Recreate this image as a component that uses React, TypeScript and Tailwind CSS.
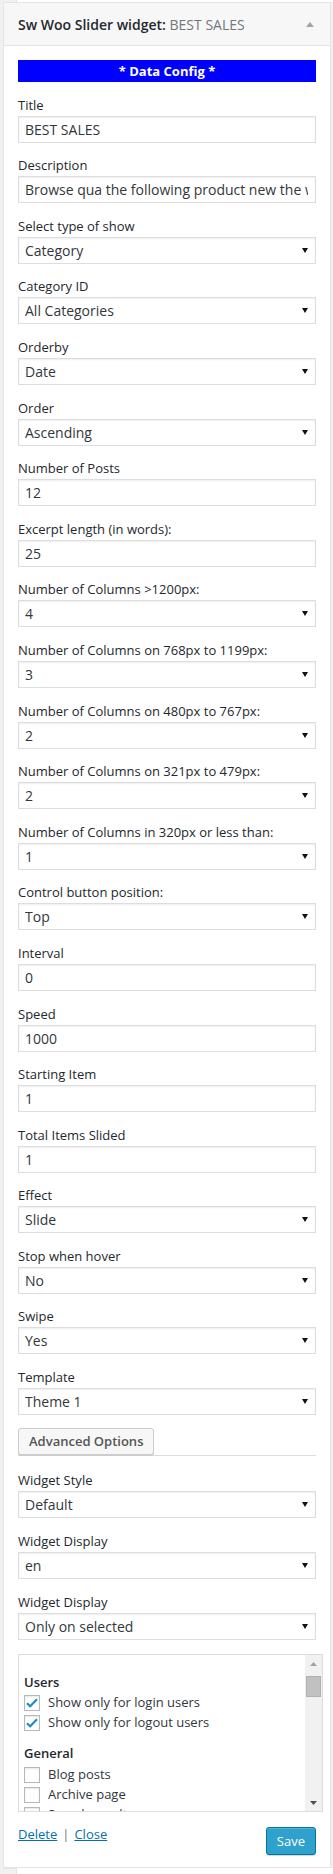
import React from "react";

type FieldProps = { label: string; value: string; select?: boolean; gap?: string };

const Caret = () => (
  <svg width="6" height="5" viewBox="0 0 6 5" className="shrink-0">
    <path d="M0 0h6L3 5z" fill="#111" />
  </svg>
);

function Field({ label, value, select, gap = "mt-[13.6px]" }: FieldProps) {
  return (
    <div className={gap}>
      <div className="text-[13px] leading-[18px] text-[#23282d]">{label}</div>
      <div className="mt-[2px] h-[27px] border border-[#ddd] bg-white shadow-[inset_0_1px_2px_rgba(0,0,0,0.07)] flex items-center pl-[6px] pr-[7px] text-[14px] text-[#32373c]">
        <span className="flex-1 overflow-hidden whitespace-nowrap">{value}</span>
        {select && <Caret />}
      </div>
    </div>
  );
}

function Check({ checked, label }: { checked?: boolean; label: string }) {
  return (
    <div className="flex items-center h-[20px]">
      <div className="w-[16px] h-[16px] border border-[#b4b9be] bg-white shadow-[inset_0_1px_2px_rgba(0,0,0,0.1)] flex items-center justify-center">
        {checked && (
          <svg width="12" height="10" viewBox="0 0 12 10">
            <path d="M1 5.2l3.2 3L11 1.2" stroke="#1e8cbe" strokeWidth="2.2" fill="none" />
          </svg>
        )}
      </div>
      <span className="ml-[8px] text-[13px] text-[#32373c]">{label}</span>
    </div>
  );
}

const fields: FieldProps[] = [
  { label: "Title", value: "BEST SALES" },
  { label: "Description", value: "Browse qua the following product new the week" },
  { label: "Select type of show", value: "Category", select: true },
  { label: "Category ID", value: "All Categories", select: true },
  { label: "Orderby", value: "Date", select: true },
  { label: "Order", value: "Ascending", select: true },
  { label: "Number of Posts", value: "12" },
  { label: "Excerpt length (in words):", value: "25" },
  { label: "Number of Columns >1200px:", value: "4", select: true },
  { label: "Number of Columns on 768px to 1199px:", value: "3", select: true },
  { label: "Number of Columns on 480px to 767px:", value: "2", select: true },
  { label: "Number of Columns on 321px to 479px:", value: "2", select: true },
  { label: "Number of Columns in 320px or less than:", value: "1", select: true },
  { label: "Control button position:", value: "Top", select: true },
  { label: "Interval", value: "0" },
  { label: "Speed", value: "1000" },
  { label: "Starting Item", value: "1" },
  { label: "Total Items Slided", value: "1" },
  { label: "Effect", value: "Slide", select: true },
  { label: "Stop when hover", value: "No", select: true },
  { label: "Swipe", value: "Yes", select: true },
  { label: "Template", value: "Theme 1", select: true },
];

export default function App() {
  return (
    <div className="w-[333px] h-[1874px] bg-[#f1f1f1] font-['Open_Sans',sans-serif] overflow-hidden">
      <div className="ml-[16px] h-[2px] bg-white border-l border-[#e5e5e5]" />

      <div className="ml-[3px] w-[328px] border border-[#e5e5e5] bg-white shadow-[0_1px_1px_rgba(0,0,0,0.04)]">
        {/* Header */}
        <div className="h-[43px] bg-[#f7f7f7] border-b border-[#e5e5e5] flex items-center pl-[14px] pr-[16px]">
          <h3 className="flex-1 text-[14px] text-[#23282d] font-semibold whitespace-nowrap">
            Sw Woo Slider widget: <span className="font-normal text-[#72777c]">BEST SALES</span>
          </h3>
          <svg width="8" height="5" viewBox="0 0 8 5">
            <path d="M0 5L4 0l4 5z" fill="#a0a5aa" />
          </svg>
        </div>

        <div className="px-[14px] pt-[14px] pb-[12px]">
          <div className="h-[22px] bg-[#0000ff] text-white text-[13px] font-bold leading-[22px] text-center">
            * Data Config *
          </div>

          {fields.map((f) => (
            <Field key={f.label} {...f} />
          ))}

          {/* Tabs */}
          <div className="mt-[14px] h-[27px] flex items-end border-b border-[#ddd]">
            <button className="h-[27px] px-[10px] bg-[#f7f7f7] border border-[#ccc] rounded-[3px] shadow-[0_1px_0_#ccc] text-[13px] font-semibold text-[#555] leading-[25px]">
              Advanced Options
            </button>
          </div>

          <Field label="Widget Style" value="Default" select gap="mt-[15px]" />
          <Field label="Widget Display" value="en" select gap="mt-[14px]" />
          <Field label="Widget Display" value="Only on selected" select gap="mt-[14px]" />

          {/* Checklist */}
          <div className="mt-[14px] w-[305px] h-[158px] border border-[#ddd] bg-white flex overflow-hidden">
            <div className="flex-1 pl-[5px] pt-[18px] overflow-hidden">
              <div className="text-[13px] leading-[18px] font-semibold text-[#23282d]">Users</div>
              <div className="mt-[2px]">
                <Check checked label="Show only for login users" />
                <Check checked label="Show only for logout users" />
              </div>
              <div className="mt-[11px] text-[13px] leading-[18px] font-semibold text-[#23282d]">General</div>
              <div className="mt-[3px]">
                <Check label="Blog posts" />
                <Check label="Archive page" />
                <Check label="Search results" />
              </div>
            </div>
            <div className="w-[17px] bg-[#f1f1f1] flex flex-col items-center">
              <div className="h-[17px] flex items-center justify-center">
                <svg width="7" height="4" viewBox="0 0 7 4">
                  <path d="M0 4L3.5 0 7 4z" fill="#a3a3a3" />
                </svg>
              </div>
              <div className="mt-[4px] w-[15px] h-[21px] bg-[#c1c1c1] border border-[#b0b0b0]" />
              <div className="flex-1" />
              <div className="h-[17px] flex items-center justify-center">
                <svg width="7" height="4" viewBox="0 0 7 4">
                  <path d="M0 0h7L3.5 4z" fill="#505050" />
                </svg>
              </div>
            </div>
          </div>

          {/* Footer */}
          <div className="mt-[13px] flex justify-between items-start">
            <div className="text-[13px] leading-[18px] text-[#72777c]">
              <a href="#" className="text-[#0073aa] underline">Delete</a>
              <span className="mx-[5px]">|</span>
              <a href="#" className="text-[#0073aa] underline">Close</a>
            </div>
            <button className="mt-[2px] h-[28px] px-[10px] bg-[#2ea2cc] border border-[#0074a2] rounded-[3px] shadow-[inset_0_1px_0_rgba(120,200,230,0.5),0_1px_0_rgba(0,0,0,0.15)] text-white text-[13px] leading-[26px]">
              Save
            </button>
          </div>
        </div>
      </div>

      <div className="ml-[16px] h-[6px] bg-white border-l border-[#e5e5e5]" />
    </div>
  );
}
